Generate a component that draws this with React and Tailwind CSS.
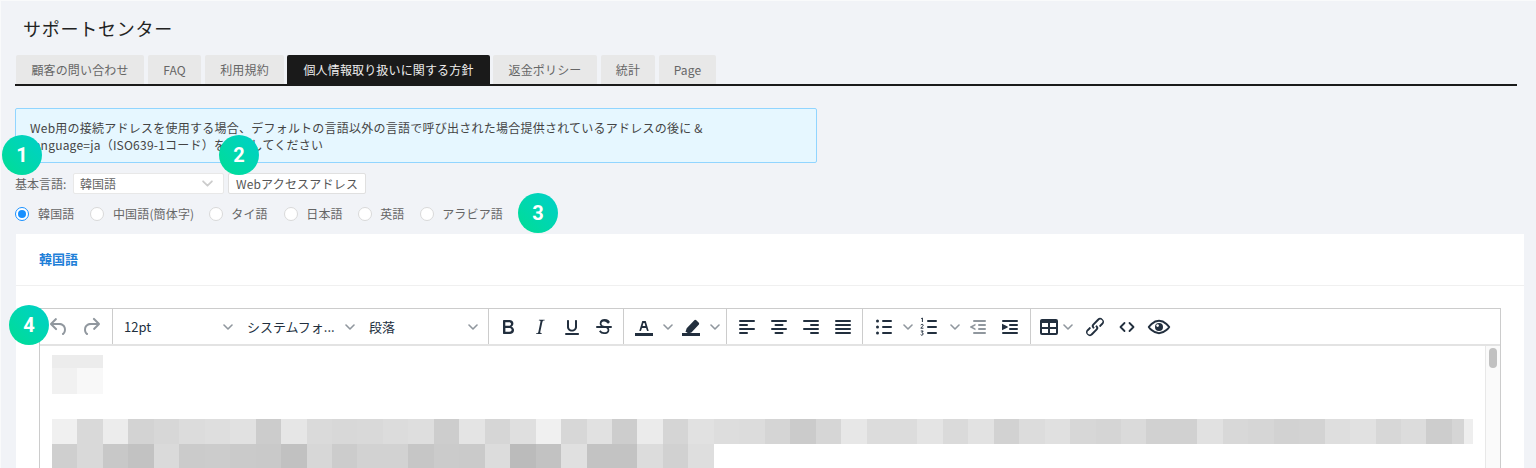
import React from "react";

const FONT = "font-['Noto_Sans_CJK_JP','Noto_Sans',sans-serif]";

const Icon = ({ children, dim }) => (
  <svg viewBox="0 0 24 24" width="24" height="24" fill="#222f3e" fillOpacity={dim ? 0.5 : 1}>
    {children}
  </svg>
);

const Chevron = ({ color = "#222f3e", opacity = 0.5, size = 10 }) => (
  <svg viewBox="0 0 10 10" width={size} height={size} fill="none" stroke={color} strokeOpacity={opacity} strokeWidth="1.6" strokeLinecap="round" strokeLinejoin="round">
    <path d="M1 3l4 4 4-4" />
  </svg>
);

const Btn = ({ children, className = "" }) => (
  <div className={`w-8 h-9 flex items-center justify-center shrink-0 ${className}`}>{children}</div>
);

const Caret = ({ w = "w-4", className = "justify-center" }) => (
  <div className={`${w} h-9 flex items-center shrink-0 ${className}`}><Chevron /></div>
);

const Select = ({ label, w }) => (
  <div className={`${w} h-9 pl-2 pr-[6px] flex items-center justify-between shrink-0`}>
    <span className="text-[13px] text-[#222f3e] whitespace-nowrap">{label}</span>
    <Chevron />
  </div>
);

const Lines = ({ rows }) => rows.map(([x, y, w], i) => <rect key={i} x={x} y={y} width={w} height="2" rx="1" />);

const tabs = [
  ["顧客の問い合わせ", "w-[128px]"],
  ["FAQ", "w-[53px]"],
  ["利用規約", "w-[79px]"],
  ["個人情報取り扱いに関する方針", "w-[203px] -mx-px", true],
  ["返金ポリシー", "w-[104px]"],
  ["統計", "w-[54px]"],
  ["Page", "w-[57px]"],
];

const radios = [
  ["韓国語", true, "mr-[15.5px]", "gap-[9px]"],
  ["中国語(簡体字)", false, "mr-[15px]", "gap-[9px]"],
  ["タイ語", false, "mr-[16.5px]", "gap-[8px]"],
  ["日本語", false, "mr-[15.5px]", "gap-[8px]"],
  ["英語", false, "mr-[15.7px]", "gap-[8px]"],
  ["アラビア語", false, "", "gap-[8px]"],
];

const g = (s) => s.split(",").map((v) => `#${v}${v}${v}`);
const row1 = g("ec,ec");
const row2 = g("f1,f8");
const row3 = g("f0,d9,ec,d3,d7,dc,de,e1,cc,e6,da,d8,d9,dc,de,cd,e4,d6,df,f0,d7,e1,cd,eb,d5,e1,dd,dc,d5,cb,d6,e7,dc,dc,e4,da,e2,d2,dc,e0,d7,d5,da,d1,d1,e1,d8,d6,d2,d3,de,e1,d7,dc,cd");
const row4 = g("cf,d9,c8,c2,da,cb,cc,ca,c9,c1,d7,cc,d2,d2,c6,cb,ca,dc,bb,c2,e0,c3,c3,dc,d1,de");

const Row = ({ cells, h, tail }) => (
  <div className={`flex ${h}`}>
    {cells.map((c, i) => (
      <div key={i} className="w-[25.46px] shrink-0" style={{ backgroundColor: c }} />
    ))}
    {tail}
  </div>
);

const Badge = ({ n, className }) => (
  <div className={`absolute w-10 h-10 rounded-full bg-linear-to-tr from-[#00de92] to-[#00cfc9] flex items-center justify-center text-white text-[20px] font-bold font-['Roboto',sans-serif] ${className}`}>
    {n}
  </div>
);

export default function App() {
  return (
    <div className={`relative h-[468px] w-[1536px] overflow-hidden bg-[#f1f3f7] border-t border-l border-[#f9fafb] pl-[14px] ${FONT}`}>
      <div className="h-[54px] pl-[8px] flex items-center text-[18px] font-normal tracking-[0.75px] text-[#222]">サポートセンター</div>

      <div className="w-[1502px] h-[31px] border-b-2 border-[#1a1a1a] flex items-stretch pl-px gap-[4px]">
        {tabs.map(([t, w, active]) => (
          <div
            key={t}
            className={`${w} flex items-center justify-center pt-px text-[12px] tracking-[0.15px] rounded-t-[2px] ${active ? "bg-[#1a1a1a] text-[#eee]" : "bg-[#e8e8e8] text-[#666]"}`}
          >
            {t}
          </div>
        ))}
      </div>

      <div className="mt-[22px] w-[802px] h-[55px] border border-[#91d5ff] rounded-[2px] bg-[#e6f7ff] pl-[14px] pt-[10px] text-[12px] leading-[17px] text-[#444]">
        <div className="whitespace-nowrap tracking-[0.24px]">Web用の接続アドレスを使用する場合、デフォルトの言語以外の言語で呼び出された場合提供されているアドレスの後に &amp;</div>
        <div className="whitespace-nowrap tracking-[0.22px]">language=ja（ISO639-1コード）を追加してください</div>
      </div>

      <div className="mt-[10px] h-[21px] flex items-center text-[12px] text-[#666]">
        <span className="w-[58px] shrink-0 whitespace-nowrap">基本言語:</span>
        <div className="w-[151px] h-[21px] bg-white border border-[#e8e8e8] rounded-[2px] flex items-center justify-between pl-[6px] pr-[10px]">
          <span>韓国語</span>
          <Chevron color="#cccccc" opacity={1} size={11} />
        </div>
        <div className="ml-[4px] w-[138px] h-[21px] bg-white border border-[#e0e0e0] rounded-[2px] flex items-center justify-center tracking-[0.2px] text-[#555]">Webアクセスアドレス</div>
      </div>

      <div className="mt-[11px] h-[18px] flex items-center text-[12px] tracking-[0.15px] text-[#666]">
        {radios.map(([t, on, m, gap]) => (
          <div key={t} className={`flex items-center ${gap} ${m}`}>
            {on ? (
              <div className="w-[14px] h-[14px] rounded-full border border-[#1890ff] bg-white flex items-center justify-center">
                <div className="w-2 h-2 rounded-full bg-[#1890ff]" />
              </div>
            ) : (
              <div className="w-[14px] h-[14px] rounded-full border border-[#d9d9d9] bg-white" />
            )}
            <span className="whitespace-nowrap">{t}</span>
          </div>
        ))}
      </div>

      <div className="mt-[11px] ml-px w-[1508px] bg-white h-[234px] overflow-hidden">
        <div className="h-[52px] border-b border-[#f0f0f0] pl-[23px] pb-[2px] flex items-center text-[13px] font-bold text-[#1f80d8]">韓国語</div>

        <div className="mt-[22px] mx-[23px] border border-[#cccccc] border-b-0">
          <div className="h-[37px] border-b-2 border-[#e3e3e3] flex items-stretch bg-white">
            <div className="pl-[3px] pr-[5px] flex border-r border-[#cccccc] shrink-0">
              <Btn><Icon dim><path d="M6.4 8H12c3.7 0 6.2 2 6.8 5.1.6 2.7-.4 5.6-2.3 6.8a1 1 0 0 1-1-1.8c1.1-.6 1.8-2.7 1.4-4.6-.5-2.1-2.1-3.5-4.9-3.5H6.4l3.3 3.3a1 1 0 1 1-1.4 1.4l-5-5a1 1 0 0 1 0-1.4l5-5a1 1 0 0 1 1.4 1.4L6.4 8z" /></Icon></Btn>
              <Btn><Icon dim><path d="M17.6 10H12c-2.8 0-4.4 1.4-4.9 3.5-.4 2 .3 4 1.4 4.6a1 1 0 1 1-1 1.8c-2-1.2-2.9-4.1-2.3-6.8.6-3 3-5.1 6.8-5.1h5.6l-3.3-3.3a1 1 0 1 1 1.4-1.4l5 5a1 1 0 0 1 0 1.4l-5 5a1 1 0 0 1-1.4-1.4l3.3-3.3z" /></Icon></Btn>
            </div>
            <div className="pl-[3px] pr-[4px] flex border-r border-[#cccccc] shrink-0">
              <Select label="12pt" w="w-[123px]" />
              <Select label="システムフォ..." w="w-[122px]" />
              <Select label="段落" w="w-[123px]" />
            </div>
            <div className="pl-[3px] pr-[3px] flex border-r border-[#cccccc] shrink-0">
              <Btn><Icon><path d="M7.8 19c-.3 0-.5 0-.6-.2l-.2-.5V5.7c0-.2 0-.4.2-.5l.6-.2h5c1.5 0 2.7.3 3.5 1 .7.6 1.1 1.4 1.1 2.5a3 3 0 0 1-.6 1.9c-.4.6-1 1-1.6 1.2.4.1.9.3 1.3.6s.8.7 1 1.2c.4.4.5 1 .5 1.6 0 1.3-.4 2.3-1.3 3-.8.7-2.1 1-3.8 1H7.8zm5-8.3c.6 0 1.2-.1 1.6-.5.4-.3.6-.7.6-1.3 0-1.1-.8-1.7-2.3-1.7H9.3v3.5h3.4zm.5 6c.7 0 1.3-.1 1.7-.4.4-.4.6-.9.6-1.5s-.2-1-.7-1.4c-.4-.3-1-.4-2-.4H9.4v3.8h4z" /></Icon></Btn>
              <Btn><Icon><path d="M16.7 4.7l-.1.9h-.3c-.6 0-1 0-1.4.3-.3.3-.4.6-.5 1.1l-2.1 9.8v.6c0 .5.4.8 1.4.8h.2l-.2.8H8l.2-.8h.2c1.1 0 1.8-.5 2-1.5l2-9.8.1-.5c0-.6-.4-.8-1.4-.8h-.3l.2-.9h5.8z" /></Icon></Btn>
              <Btn><Icon><path d="M16 5c.6 0 1 .4 1 1v6c0 2.6-2.2 4.6-5 4.6S7 14.6 7 12V6c0-.6.4-1 1-1s1 .4 1 1v6c0 1.6 1.3 2.8 3 2.8s3-1.2 3-2.8V6c0-.6.4-1 1-1zM6 18h12c.6 0 1 .4 1 1s-.4 1-1 1H6a1 1 0 1 1 0-2z" /></Icon></Btn>
              <Btn><Icon><path d="M15.6 8.5c-.5-.7-1-1.1-1.3-1.3-.6-.4-1.3-.6-2-.6-2.7 0-2.8 1.7-2.8 2.1 0 1.6 1.8 2 3.2 2.3 4.4.9 4.6 2.8 4.6 3.9 0 1.4-.7 4.1-5 4.1A6.2 6.2 0 0 1 7 16.4l1.5-1.1c.4.6 1.6 2 3.7 2 1.6 0 2.5-.4 3-1 .3-.4.4-.8.4-1.3 0-1.6-1.8-2.1-3.3-2.4-.6-.1-1-.2-1.4-.4-2.9-.9-3.2-2.8-3.2-3.9 0-2.7 2.1-4.2 5-4.2 1.5 0 2.7.4 3.6 1 .6.5 1.1 1 1.6 1.9l-1.3 1.4zM5 11h14a1 1 0 0 1 0 2H5a1 1 0 0 1 0-2z" /></Icon></Btn>
            </div>
            <div className="pl-[4px] pr-[3px] flex border-r border-[#cccccc] shrink-0">
              <Btn><Icon><path d="M3 18h18v3H3z" /><path fillRule="evenodd" d="M8.7 16h-.8a.5.5 0 0 1-.5-.6l2.7-9c.1-.3.3-.4.5-.4h2.8c.2 0 .4.1.5.4l2.7 9a.5.5 0 0 1-.5.6h-.8a.5.5 0 0 1-.4-.4l-.7-2.2c0-.3-.3-.4-.5-.4h-3.4c-.2 0-.4.1-.5.4l-.7 2.2c0 .3-.2.4-.4.4zm2.6-7.6l-.6 2a.5.5 0 0 0 .5.6h1.6a.5.5 0 0 0 .5-.6l-.6-2c0-.3-.3-.4-.5-.4h-.4c-.2 0-.4.1-.5.4z" /></Icon></Btn>
              <Caret w="w-[15px]" />
              <Btn><Icon><path d="M3 18h18v3H3z" /><path d="M6.500 16.800l1.200-3.600 7.400-7.800a1.600 1.600 0 0 1 2.200-.1l2.300 2.100c.7.600.7 1.600.1 2.300l-7.300 7.700-3.400 1-.9-.8-1.600-.8z" /></Icon></Btn>
              <Caret w="w-4" />
            </div>
            <div className="pl-[4px] pr-[3px] flex border-r border-[#cccccc] shrink-0">
              <Btn><Icon><Lines rows={[[4,5,16],[4,9,9],[4,13,16],[4,17,9]]} /></Icon></Btn>
              <Btn><Icon><Lines rows={[[4,5,16],[7.5,9,9],[4,13,16],[7.5,17,9]]} /></Icon></Btn>
              <Btn><Icon><Lines rows={[[4,5,16],[11,9,9],[4,13,16],[11,17,9]]} /></Icon></Btn>
              <Btn><Icon><Lines rows={[[4,5,16],[4,9,16],[4,13,16],[4,17,16]]} /></Icon></Btn>
            </div>
            <div className="pl-[5px] pr-[4px] flex border-r border-[#cccccc] shrink-0">
              <Btn><Icon><circle cx="5.5" cy="6" r="1.5" /><circle cx="5.5" cy="12" r="1.5" /><circle cx="5.5" cy="18" r="1.5" /><Lines rows={[[10,5,10],[10,11,10],[10,17,10]]} /></Icon></Btn>
              <Caret w="w-[15px]" />
              <Btn className="-translate-x-[2px]"><Icon><path d="M4.200 3.600l1.200-.6v4" fill="none" stroke="#222f3e" strokeWidth="1" /><path d="M3.800 10.200c.3-1.200 2.400-1.200 2.400 0 0 1-1.800 1.800-2.400 3h2.600" fill="none" stroke="#222f3e" strokeWidth="1" /><path d="M3.800 16h2.400l-1.300 1.600c1.600 0 1.600 2.600 0 2.600-.5 0-1-.2-1.200-.6" fill="none" stroke="#222f3e" strokeWidth="1" /><Lines rows={[[10,5,10],[10,11,10],[10,17,10]]} /></Icon></Btn>
              <Caret w="w-[15px]" />
              <Btn><Icon dim><Lines rows={[[7,5,13],[12,9,8],[12,13,8],[7,17,13]]} /><path d="M9.500 8.800L4.200 11.600a.5.5 0 0 0 0 .8l5.300 2.800v-1.800L6.700 12l2.800-1.400z" /></Icon></Btn>
              <Btn><Icon><Lines rows={[[4,5,16],[11,9,9],[11,13,9],[4,17,16]]} /><path d="M4 8.800l5.600 2.800a.5.5 0 0 1 0 .8L4 15.200z" /></Icon></Btn>
            </div>
            <div className="pl-[2px] flex shrink-0">
              <Btn><Icon><path fillRule="evenodd" d="M19 4a2 2 0 0 1 2 2v12a2 2 0 0 1-2 2H5a2 2 0 0 1-2-2V6c0-1.100.9-2 2-2h14zM5 14v4h6v-4H5zm14 0h-6v4h6v-4zm0-6h-6v4h6V8zM5 12h6V8H5v4z" /></Icon></Btn>
              <Caret w="w-[14px]" className="justify-start -ml-[2px] mr-[2px]" />
              <Btn><Icon><path d="M6.200 12.300a1 1 0 0 1 1.400 1.400l-2 2a2 2 0 1 0 2.600 2.800l4.800-4.800a1 1 0 0 0 0-1.400 1 1 0 1 1 1.400-1.300 2.900 2.900 0 0 1 0 4L9.600 20a3.900 3.900 0 0 1-5.500-5.500l2-2zm11.600-.6a1 1 0 0 1-1.400-1.400l2-2a2 2 0 1 0-2.600-2.800L11 10.300a1 1 0 0 0 0 1.400A1 1 0 1 1 9.600 13a2.900 2.900 0 0 1 0-4L14.400 4a3.900 3.900 0 0 1 5.500 5.500l-2 2z" /></Icon></Btn>
              <Btn><svg viewBox="0 0 24 24" width="24" height="24" fill="none" stroke="#222f3e" strokeWidth="1.8" strokeLinecap="round" strokeLinejoin="round"><path d="M9.500 8L5.500 12l4 4M14.500 8l4 4-4 4" /></svg></Btn>
              <Btn><svg viewBox="0 0 24 24" width="24" height="24" fill="none"><path d="M1.800 12S5.800 5.800 12 5.800 22.200 12 22.200 12 18.200 18.200 12 18.200 1.800 12 1.800 12z" stroke="#222f3e" strokeWidth="2" strokeLinejoin="round" /><circle cx="12" cy="12" r="4" fill="#222f3e" /><circle cx="10.600" cy="10.600" r="1.300" fill="#fff" /></svg></Btn>
            </div>
          </div>

          <div className="flex h-[130px]">
            <div className="flex-1 pl-3 pt-[9px]">
              <Row cells={row1} h="h-[13px]" />
              <Row cells={row2} h="h-[26px]" />
              <div className="h-[25px]" />
              <Row
                cells={row3}
                h="h-[25px]"
                tail={
                  <>
                    <div className="w-[12px] shrink-0 bg-[#d5d5d5]" />
                    <div className="w-[9px] shrink-0 bg-[#eeeeee]" />
                  </>
                }
              />
              <Row cells={row4} h="h-[25px]" />
            </div>
            <div className="w-[15px] bg-[#fafafa] border-l border-[#e8e8e8] pt-[2px] pl-[3px]">
              <div className="w-2 h-5 rounded-full bg-[#c1c1c1]" />
            </div>
          </div>
        </div>
      </div>

      <Badge n="1" className="left-[1px] top-[134px]" />
      <Badge n="2" className="left-[218px] top-[134px]" />
      <Badge n="3" className="left-[517px] top-[192px]" />
      <Badge n="4" className="left-[8px] top-[304px]" />
    </div>
  );
}
